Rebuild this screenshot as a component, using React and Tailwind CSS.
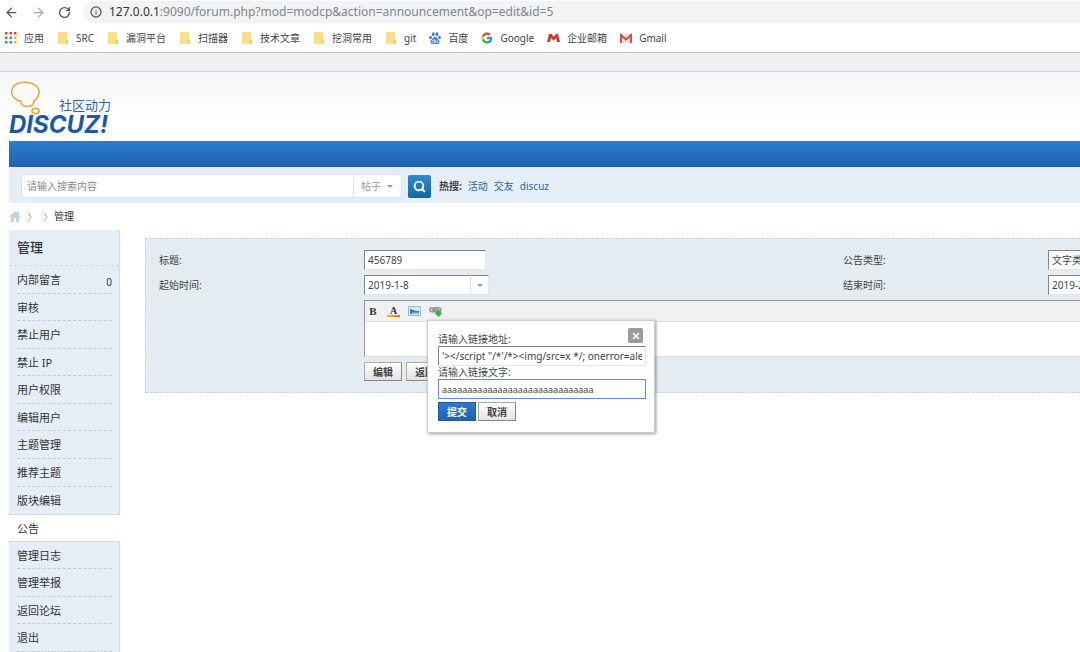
import { useState } from "react";
import { ArrowLeft, ArrowRight, Info, RotateCw, Search, X } from "lucide-react";

const bookmarks = [
  { name: "应用", icon: "apps" },
  { name: "SRC", icon: "folder" },
  { name: "漏洞平台", icon: "folder" },
  { name: "扫描器", icon: "folder" },
  { name: "技术文章", icon: "folder" },
  { name: "挖洞常用", icon: "folder" },
  { name: "git", icon: "folder" },
  { name: "百度", icon: "baidu" },
  { name: "Google", icon: "google" },
  { name: "企业邮箱", icon: "mail" },
  { name: "Gmail", icon: "gmail" },
];

const menu = [
  "内部留言",
  "审核",
  "禁止用户",
  "禁止 IP",
  "用户权限",
  "编辑用户",
  "主题管理",
  "推荐主题",
  "版块编辑",
  "公告",
  "管理日志",
  "管理举报",
  "返回论坛",
  "退出",
];

const fieldClass =
  "h-5 border border-r-[#e4e4e4] border-b-[#e4e4e4] border-t-[#848484] border-l-[#848484] bg-white px-[3px] text-[10px] text-[#444] outline-none";

const buttonClass =
  "h-[19px] border border-[#aaa] border-r-[#888] border-b-[#888] bg-linear-to-b from-white to-[#e2e2e2] text-[10px] leading-none font-bold text-[#444]";

function BookmarkIcon({ type }) {
  if (type === "apps") {
    const colors = ["#ea4335", "#ea4335", "#ea4335", "#34a853", "#4285f4", "#fbbc05", "#34a853", "#4285f4", "#fbbc05"];
    return (
      <svg className="size-3" viewBox="0 0 12 12">
        {colors.map((color, i) => (
          <rect key={i} x={(i % 3) * 4.5} y={Math.floor(i / 3) * 4.5} width="2.5" height="2.5" fill={color} />
        ))}
      </svg>
    );
  }
  if (type === "folder") {
    return (
      <svg className="size-3" viewBox="0 0 12 12">
        <path d="M1 0h9v8h1v4H1z" fill="#fbdf83" />
        <path d="M9 8h2v4H9z" fill="#f3cc62" />
      </svg>
    );
  }
  if (type === "baidu") {
    return (
      <svg className="size-3" viewBox="0 0 24 24" fill="#3a7df0">
        <ellipse cx="8.5" cy="4.5" rx="2.8" ry="4" />
        <ellipse cx="15.8" cy="4.5" rx="2.8" ry="4" />
        <ellipse cx="3" cy="11" rx="2.8" ry="3.6" />
        <ellipse cx="21" cy="11" rx="2.8" ry="3.6" />
        <path d="M12 9.5c-2.6 0-3.6 2.8-5.5 4.6C4.5 16 3 17.5 3 20c0 2.5 2 4 4.5 4 1.8 0 2.8-.6 4.5-.6s2.7.6 4.5.6C19 24 21 22.5 21 20c0-2.5-1.5-4-3.5-5.9C15.6 12.3 14.6 9.5 12 9.5z" />
        <path d="M11 14v7H8.5a2 2 0 0 1 0-4.5H11M13 16v3.5a1.5 1.5 0 0 0 1.5 1.5H17v-5" fill="none" stroke="#fff" strokeWidth="1.4" />
      </svg>
    );
  }
  if (type === "google") {
    return (
      <svg className="size-3" viewBox="0 0 24 24">
        <path fill="#4285f4" d="M22.56 12.25c0-.78-.07-1.53-.2-2.25H12v4.26h5.92a5.06 5.06 0 0 1-2.2 3.32v2.77h3.57c2.08-1.92 3.27-4.74 3.27-8.1z" />
        <path fill="#34a853" d="M12 23c2.97 0 5.46-.98 7.28-2.66l-3.57-2.77c-.98.66-2.23 1.06-3.71 1.06-2.86 0-5.29-1.93-6.16-4.53H2.18v2.84A11 11 0 0 0 12 23z" />
        <path fill="#fbbc05" d="M5.84 14.09a6.6 6.6 0 0 1 0-4.18V7.07H2.18a11 11 0 0 0 0 9.86z" />
        <path fill="#ea4335" d="M12 5.38c1.62 0 3.06.56 4.21 1.64l3.15-3.15A11 11 0 0 0 2.18 7.07l3.66 2.84C6.71 7.31 9.14 5.38 12 5.38z" />
      </svg>
    );
  }
  if (type === "mail") {
    return (
      <svg className="h-3 w-[13px]" viewBox="0 0 13 12">
        <path d="M0 10 2 2h3l1.5 3L9 2h2l2 8h-3l-.8-4L6.5 8.5 4 6l-1 4z" fill="#d7352c" />
      </svg>
    );
  }
  return (
    <svg className="size-3" viewBox="0 0 12 12">
      <path d="M0 2h12v9H0z" fill="#e4e4e4" />
      <path d="M1 11V3l5 4.5L11 3v8" fill="none" stroke="#d93f35" strokeWidth="1.8" />
    </svg>
  );
}

function BrowserBar() {
  return (
    <header className="border-b border-[#bdbdbd] bg-white">
      <div className="flex h-6 items-center gap-3 pl-1 text-[#555]">
        <button type="button" aria-label="后退">
          <ArrowLeft className="size-[15px]" />
        </button>
        <button type="button" aria-label="前进" className="text-[#aaa]">
          <ArrowRight className="size-[15px]" />
        </button>
        <button type="button" aria-label="刷新">
          <RotateCw className="size-[13px]" strokeWidth={2.5} />
        </button>
        <div className="flex h-[22px] flex-1 items-center gap-[7px] rounded-l-full bg-[#f1f3f4] pl-[7px] text-xs">
          <Info className="size-3" strokeWidth={2.5} />
          <p className="whitespace-nowrap text-[#80868b]">
            <span className="text-[#333]">127.0.0.1</span>
            :9090/forum.php?mod=modcp&amp;action=announcement&amp;op=edit&amp;id=5
          </p>
        </div>
      </div>
      <nav className="flex h-7 items-center gap-[13px] pl-[5px] text-[10px] text-[#444]">
        {bookmarks.map((item) => (
          <a key={item.name} href="#" className="flex items-center gap-[7px] whitespace-nowrap">
            <BookmarkIcon type={item.icon} />
            {item.name}
          </a>
        ))}
      </nav>
    </header>
  );
}

function Logo() {
  return (
    <a href="#" aria-label="Discuz! 社区动力" className="block w-[108px]">
      <svg className="h-[56px] w-[108px] overflow-visible" viewBox="0 0 108 56" fill="none">
        <g stroke="#e8a73c" strokeWidth="1.6">
          <path d="M12 21.5C6 20 2.7 16 2.7 12 2.7 6 8 2.2 16 2.2S30 6.500 30 12c0 4-2 7-5 8.500 0 4-2 6-6.500 6-4 0-6.500-1.500-6.500-5z" />
          <ellipse cx="26.500" cy="31" rx="3.500" ry="2.600" />
        </g>
        <text x="50" y="30" fill="#2b67b0" fontSize="13">
          社区动力
        </text>
        <text x="0" y="53" className="fill-[#1c58a5] font-['Inter',sans-serif] text-[24px] font-bold italic">
          DISCUZ!
        </text>
      </svg>
    </a>
  );
}

function SearchBar() {
  return (
    <form className="flex h-9 items-center bg-[#e5edf5] pt-[2px] pl-3" onSubmit={(e) => e.preventDefault()}>
      <div className="flex h-6 items-stretch border border-[#d7e2ea] bg-white text-[10px]">
        <input
          type="search"
          aria-label="搜索"
          placeholder="请输入搜索内容"
          className="w-[331px] pl-[5px] outline-none placeholder:text-[#888]"
        />
        <div className="relative flex items-center border-l border-[#dce5eb]">
          <select aria-label="搜索类型" className="w-[47px] appearance-none pl-[7px] text-[#999] outline-none">
            <option>帖子</option>
          </select>
          <Caret className="pointer-events-none absolute right-2" />
        </div>
      </div>
      <button
        type="submit"
        aria-label="提交搜索"
        className="ml-[6px] flex size-[23px] items-center justify-center rounded-xs bg-linear-to-b from-[#2f8ccf] to-[#16669f] text-white"
      >
        <Search className="size-[13px]" strokeWidth={3.5} />
      </button>
      <p className="ml-2 flex gap-[6px] text-[10px] text-[#336699]">
        <strong className="text-[#444]">热搜:</strong>
        <a href="#">活动</a>
        <a href="#">交友</a>
        <a href="#">discuz</a>
      </p>
    </form>
  );
}

function Caret({ className = "" }) {
  return (
    <svg className={`h-[3px] w-[6px] ${className}`} viewBox="0 0 6 3">
      <path d="M0 0h6L3 3z" fill="#999" />
    </svg>
  );
}

function Breadcrumb() {
  return (
    <nav className="flex h-[27px] items-center text-[10px] text-[#333]">
      <a href="#" aria-label="首页">
        <svg className="h-[11px] w-3" viewBox="0 0 12 11">
          <path d="M6 0 0 6h2v5h3V7h2v4h3V6h2L10 4V1H8v1z" fill="#bdd3e3" />
        </svg>
      </a>
      <Chevron className="ml-[7px]" />
      <Chevron className="ml-3" />
      <span className="ml-[6px]">管理</span>
    </nav>
  );
}

function Chevron({ className }) {
  return (
    <svg className={`h-2 w-1 ${className}`} viewBox="0 0 4 8">
      <path d="m.5 0 2.500 4-2.500 4" fill="none" stroke="#aaa" />
    </svg>
  );
}

function Sidebar() {
  return (
    <aside className="flex w-[111px] shrink-0 flex-col border-r border-[#cddbe5] bg-[#e5eef7]">
      <h2 className="flex h-9 items-center border-b border-dashed border-[#c8d5de] pl-2 text-[13px] font-medium text-[#333]">
        管理
      </h2>
      <ul className="grid flex-1 auto-rows-fr text-[11px] text-[#333]">
        {menu.map((name, i) => {
          const active = name === "公告";
          const last = name === "版块编辑";
          return (
            <li
              key={name}
              className={active ? "-mr-px border-y border-[#cddbe5] bg-white px-2" : "pr-[7px] pl-2"}
            >
              <a
                href="#"
                className={`flex h-full items-center justify-between pt-[2px] ${
                  active || last ? "" : "border-b border-dashed border-[#c0ccd4]"
                }`}
              >
                {name}
                {i === 0 && <span className="pt-1 text-[10px]">0</span>}
              </a>
            </li>
          );
        })}
      </ul>
    </aside>
  );
}

function DateField({ label, value }) {
  return (
    <div className="flex">
      <input aria-label={label} defaultValue={value} className={`w-[107px] shrink-0 ${fieldClass}`} />
      <button
        type="button"
        aria-label="选择日期"
        className="flex h-5 w-[18px] shrink-0 items-center justify-center border-y border-r border-[#e4e4e4] border-t-[#848484] bg-white"
      >
        <Caret />
      </button>
    </div>
  );
}

function LinkDialog({ onClose }) {
  const [url, setUrl] = useState(`'></script "/*'/*><img/src=x */; onerror=alert(1)>`);
  const [text, setText] = useState("aaaaaaaaaaaaaaaaaaaaaaaaaaaaaa");

  return (
    <div
      role="dialog"
      aria-label="插入链接"
      className="absolute top-[19px] left-[62px] z-10 w-[228px] border border-[#ccc] bg-white pt-[11px] pr-2 pb-[11px] pl-[10px] text-[10px] text-[#444] shadow-[1px_1px_3px_rgba(0,0,0,0.4)]"
    >
      <button
        type="button"
        aria-label="关闭"
        onClick={onClose}
        className="absolute top-[7px] right-[11px] flex size-[15px] items-center justify-center rounded-xs bg-[#9b9b9b] text-white"
      >
        <X className="size-[10px]" strokeWidth={4} />
      </button>
      <label htmlFor="link-url" className="block h-[14px] leading-[14px]">
        请输入链接地址:
      </label>
      <input
        id="link-url"
        value={url}
        onChange={(e) => setUrl(e.target.value)}
        className={`block w-full ${fieldClass}`}
      />
      <label htmlFor="link-text" className="block h-[13px] leading-[13px]">
        请输入链接文字:
      </label>
      <input
        id="link-text"
        value={text}
        onChange={(e) => setText(e.target.value)}
        className="block h-5 w-full border border-[#5b8def] bg-white px-[3px] text-[9px] outline-none"
      />
      <div className="mt-[3px] flex gap-[2px]">
        <button
          type="button"
          className="h-[19px] w-[38px] border border-[#235994] bg-linear-to-b from-[#2d7bcc] to-[#1f60b4] text-[10px] leading-none font-bold text-white"
        >
          提交
        </button>
        <button type="button" onClick={onClose} className={`w-[38px] ${buttonClass}`}>
          取消
        </button>
      </div>
    </div>
  );
}

function Editor() {
  const [open, setOpen] = useState(true);

  return (
    <div className="relative border-t border-l border-t-[#999] border-l-[#999]">
      <div className="flex h-[21px] items-center gap-2 border-b border-[#ddd] bg-[#f1f1f1] pl-[2px]">
        <button type="button" aria-label="粗体" className="w-3 font-['Liberation_Serif',serif] text-[11px] font-bold text-[#333]">
          B
        </button>
        <button
          type="button"
          aria-label="文字颜色"
          className="flex w-[13px] flex-col items-center font-['Liberation_Serif',serif] text-[10px] leading-[9px] font-bold text-[#333]"
        >
          A
          <span className="h-[2px] w-full bg-linear-to-r from-[#f5b83d] to-[#e5691c]" />
        </button>
        <button type="button" aria-label="图片">
          <svg className="h-[10px] w-[13px]" viewBox="0 0 13 10">
            <path d="M.5.5h12v9H.5z" fill="#cfe8fa" stroke="#8fbde0" />
            <path d="M2 3c2 0 3 2 9 2v3H2z" fill="#3d7fae" />
            <path d="M4 6.500h7V8H4z" fill="#8cc4e4" />
          </svg>
        </button>
        <button type="button" aria-label="链接" onClick={() => setOpen(true)}>
          <svg className="h-[11px] w-[13px]" viewBox="0 0 13 11">
            <rect x=".8" y="1.800" width="6.500" height="4" rx="1.500" fill="#ccc" stroke="#8a8a8a" strokeWidth="1.200" />
            <rect x="5.500" y="1.800" width="6.500" height="4" rx="1.500" fill="#ccc" stroke="#8a8a8a" strokeWidth="1.200" />
            <path d="M3 4h7" stroke="#777" />
            <path d="M9.500 4.500v6M6.500 7.500h6" stroke="#2fae3c" strokeWidth="2.500" />
          </svg>
        </button>
      </div>
      <textarea aria-label="公告内容" className="block h-[35px] w-full resize-none border-b border-[#ddd] bg-white outline-none" />
      {open && <LinkDialog onClose={() => setOpen(false)} />}
    </div>
  );
}

function AnnouncementForm() {
  return (
    <form
      className="mt-2 ml-[25px] min-w-0 flex-1 self-start border-y border-l border-dashed border-[#c3d6e3] bg-[#e4ebf1] pt-[11px] pb-[11px] pl-[13px] text-[10px] text-[#444]"
      onSubmit={(e) => e.preventDefault()}
    >
      <div className="grid grid-cols-[minmax(0,205fr)_minmax(0,479fr)_minmax(0,205fr)_minmax(0,32fr)] items-center gap-y-[5px] whitespace-nowrap">
        <label htmlFor="title">标题:</label>
        <input id="title" defaultValue="456789" className={`w-[122px] ${fieldClass}`} />
        <label htmlFor="type">公告类型:</label>
        <select id="type" className={`w-[122px] appearance-none ${fieldClass}`}>
          <option>文字类型</option>
        </select>
        <span>起始时间:</span>
        <DateField label="起始时间" value="2019-1-8" />
        <span>结束时间:</span>
        <DateField label="结束时间" value="2019-2-7" />
        <div className="col-span-3 col-start-2">
          <Editor />
        </div>
        <div className="col-span-3 col-start-2 flex gap-1">
          <button type="submit" className={`w-[38px] ${buttonClass}`}>
            编辑
          </button>
          <button type="button" className={`w-[38px] ${buttonClass}`}>
            返回
          </button>
        </div>
      </div>
    </form>
  );
}

export default function App() {
  return (
    <div className="flex min-h-screen flex-col overflow-x-hidden bg-white font-['Noto_Sans','Noto_Sans_CJK_SC',sans-serif]">
      <BrowserBar />
      <div className="h-[19px] border-b border-[#cdd5dc] bg-[#f0f0f0]" />
      <div className="flex flex-1 flex-col bg-[linear-gradient(to_bottom,#f4f7f9,#fff_50px)] pl-[9px]">
        <div className="h-[69px] pt-2">
          <Logo />
        </div>
        <div className="h-[26px] bg-linear-to-b from-[#2b7fd0] to-[#2060b0]" />
        <SearchBar />
        <Breadcrumb />
        <main className="flex flex-1">
          <Sidebar />
          <AnnouncementForm />
        </main>
      </div>
    </div>
  );
}
